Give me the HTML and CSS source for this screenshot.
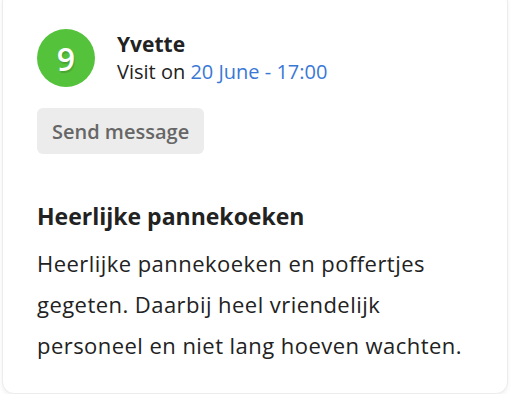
FILE: index.html
```html
<!DOCTYPE html>
<html lang="nl">
<head>
    <meta charset="UTF-8">
    <title>Review</title>
    <link rel="stylesheet" href="styles.css">
</head>
<body>
    <div class="card">
        <div class="visitor">
            <div class="score">9</div>
            <div class="info">
                <div class="name">Yvette</div>
                <div class="visit">Visit on <span class="date">20 June - 17:00</span></div>
            </div>
        </div>
        <button class="send">Send message</button>
        <h2 class="title">Heerlijke pannekoeken</h2>
        <p class="text">Heerlijke pannekoeken en poffertjes gegeten. Daarbij heel vriendelijk personeel en niet lang hoeven wachten.</p>
    </div>
</body>
</html>
```
FILE: styles.css
```css
body {
    margin: 0;
    background-color: #ffffff;
    font-family: "Open Sans", "Noto Sans", sans-serif;
    color: #222222;
}
.card {
    box-sizing: border-box;
    margin: -10px 4px 0 2px;
    padding: 38px 36px 0 34px;
    height: 404px;
    border: 1px solid #ececec;
    border-radius: 12px;
    box-shadow: 0 2px 4px rgba(0, 0, 0, 0.06);
    background-color: #ffffff;
}
.visitor {
    display: flex;
    align-items: center;
    gap: 22px;
}
.score {
    width: 58px;
    height: 58px;
    border-radius: 50%;
    background-color: #55c23c;
    color: #ffffff;
    font-size: 32px;
    font-weight: 600;
    display: flex;
    align-items: center;
    justify-content: center;
    text-shadow: 1px 2px 1px rgba(0, 0, 0, 0.15);
}
.name {
    font-size: 21px;
    font-weight: 700;
    line-height: 27px;
}
.visit {
    font-size: 20px;
    line-height: 27px;
}
.date {
    color: #3a78d6;
}
.send {
    display: block;
    margin-top: 21px;
    padding: 0 15px;
    height: 46px;
    border: none;
    border-radius: 6px;
    background-color: #ececec;
    color: #666666;
    font-family: "Open Sans", "Noto Sans", sans-serif;
    font-size: 20px;
    font-weight: 600;
}
.title {
    margin: 47px 0 0 0;
    font-size: 23px;
    font-weight: 700;
    line-height: 30px;
}
.text {
    margin: 12px 0 0 0;
    font-size: 22px;
    letter-spacing: 0.45px;
    line-height: 41px;
}
```
